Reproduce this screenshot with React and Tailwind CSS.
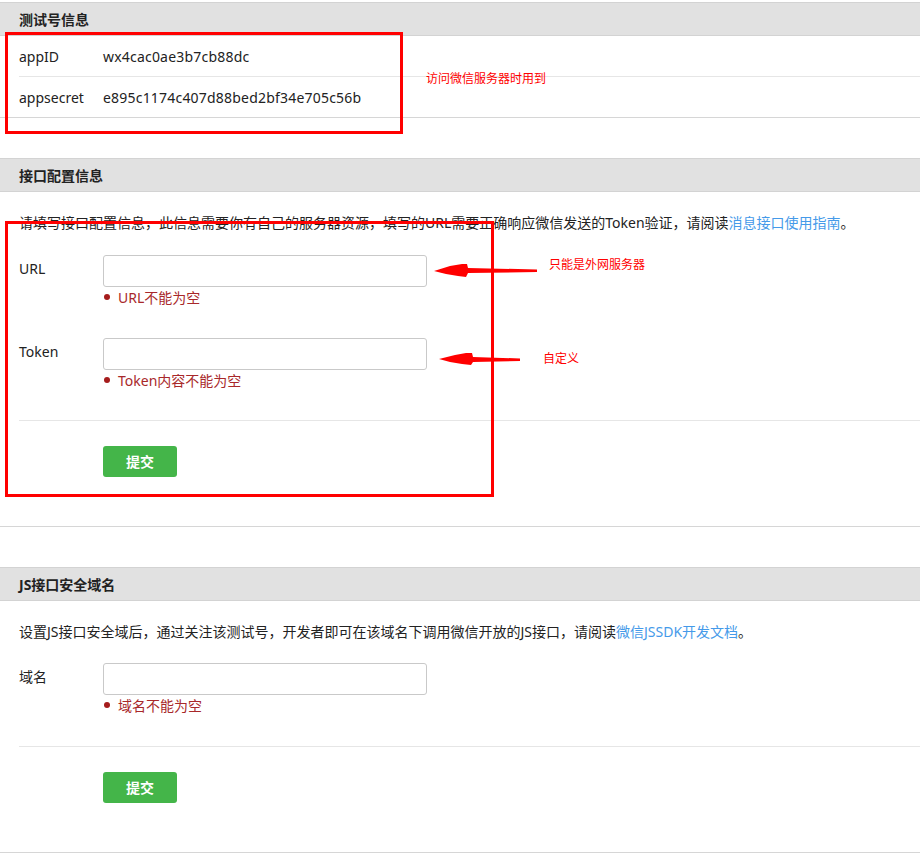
import React from "react";

const font = { fontFamily: '"Noto Sans", "Noto Sans CJK SC", sans-serif' };

function Header({ children }) {
  return (
    <div className="h-[34px] border-t border-b border-[#d3d3d3] bg-[#e1e1e1] pl-[19px] flex items-center text-[14px] font-bold text-[#222]">
      {children}
    </div>
  );
}

function ErrorLine({ children }) {
  return (
    <div className="h-[20px] flex items-center text-[14px] text-[#a8282a]">
      <span className="w-[6px] h-[6px] rounded-full bg-[#a51c1c] mr-[8px] ml-[1px]" />
      <span>{children}</span>
    </div>
  );
}

function Field({ label, error, className = "" }) {
  return (
    <div className={"flex " + className}>
      <div className="w-[84px] pt-[3px] leading-[22px] text-[14px] text-[#222]">{label}</div>
      <div className="flex flex-col">
        <input className="w-[324px] h-[32px] border border-[#c9c9c9] rounded-[3px] bg-white outline-none" />
        <ErrorLine>{error}</ErrorLine>
      </div>
    </div>
  );
}

function SubmitRow() {
  return (
    <>
      <div className="ml-[19px] border-t border-[#e6e6e6]" />
      <div className="pl-[103px] pt-[25px] pb-[49px]">
        <button className="w-[74px] h-[31px] rounded-[3px] bg-[#44b549] text-white text-[14px] font-bold leading-[31px]">
          提交
        </button>
      </div>
    </>
  );
}

export default function App() {
  return (
    <div className="relative w-[920px] h-[866px] bg-white overflow-hidden text-[#333]" style={font}>
      <div className="pt-[2px]">
        {/* Section 1 */}
        <section className="border-b border-[#d6d6d6]">
          <Header>测试号信息</Header>
          <div className="ml-[19px] h-[41px] border-b border-[#e6e6e6] flex items-center text-[14px] text-[#222]">
            <span className="w-[84px]">appID</span>
            <span className="tracking-[0.2px]">wx4cac0ae3b7cb88dc</span>
          </div>
          <div className="ml-[19px] h-[40px] flex items-center text-[14px] text-[#222]">
            <span className="w-[84px]">appsecret</span>
            <span className="tracking-[0.2px]">e895c1174c407d88bed2bf34e705c56b</span>
          </div>
        </section>

        {/* Section 2 */}
        <section className="mt-[40px] border-b border-[#d6d6d6]">
          <Header>接口配置信息</Header>
          <div className="pl-[19px] mt-[21px] h-[20px] leading-[20px] text-[14px] text-[#222] whitespace-nowrap">
            请填写接口配置信息，此信息需要你有自己的服务器资源，填写的URL需要正确响应微信发送的Token验证，请阅读
            <span className="text-[#459ae9]">消息接口使用指南</span>。
          </div>
          <div className="pl-[19px]">
            <Field label="URL" error="URL不能为空" className="mt-[22px]" />
            <Field label="Token" error="Token内容不能为空" className="mt-[31px]" />
          </div>
          <div className="h-[30px]" />
          <SubmitRow />
        </section>

        {/* Section 3 */}
        <section className="mt-[40px] border-b border-[#d6d6d6]">
          <Header>JS接口安全域名</Header>
          <div className="pl-[19px] mt-[21px] h-[20px] leading-[20px] text-[14px] text-[#222] whitespace-nowrap">
            设置JS接口安全域后，通过关注该测试号，开发者即可在该域名下调用微信开放的JS接口，请阅读
            <span className="text-[#459ae9]">微信JSSDK开发文档</span>。
          </div>
          <div className="pl-[19px]">
            <Field label="域名" error="域名不能为空" className="mt-[21px]" />
          </div>
          <div className="h-[31px]" />
          <SubmitRow />
        </section>
      </div>

      {/* Annotations overlay */}
      <div className="absolute left-[5px] top-[32px] w-[398px] h-[102px] border-[3px] border-[#ff0000]" />
      <div className="absolute left-[5px] top-[221px] w-[489px] h-[276px] border-[3px] border-[#ff0000]" />

      <div className="absolute left-[426px] top-[70px] text-[12px] leading-[18px] text-[#ff0000]">访问微信服务器时用到</div>
      <div className="absolute left-[549px] top-[256px] text-[12px] leading-[18px] text-[#ff0000]">只能是外网服务器</div>
      <div className="absolute left-[543px] top-[350px] text-[12px] leading-[18px] text-[#ff0000]">自定义</div>

      <svg className="absolute left-0 top-0" width="920" height="866" viewBox="0 0 920 866">
        <path d="M434 271 L450 266 L462 264 L467 264 L468 268 L537 269.5 L537 272 L468 273 L466 277 L458 276 L446 274 Z" fill="#ff0000" />
        <path d="M439 359 L455 355 L466 353 L472 353 L473 357 L520 358.5 L520 361 L473 362 L471 365 L462 364 L450 362 Z" fill="#ff0000" />
      </svg>
    </div>
  );
}
